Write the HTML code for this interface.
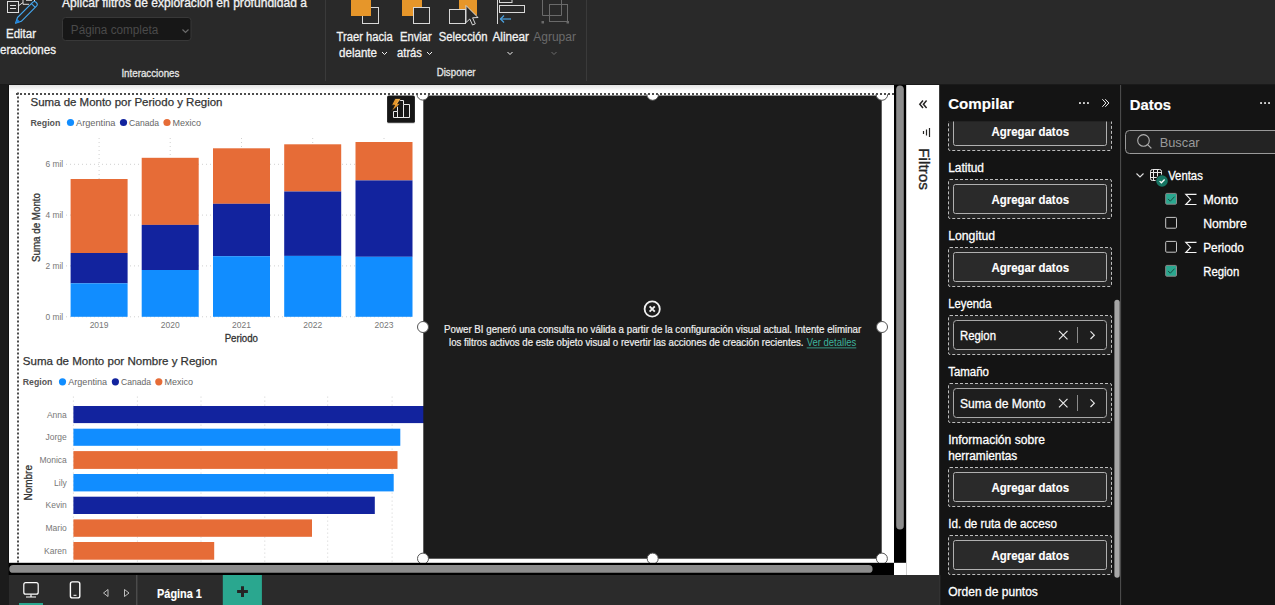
<!DOCTYPE html>
<html><head><meta charset="utf-8"><title>Power BI</title>
<style>html,body{margin:0;padding:0;background:#292929;overflow:hidden;width:1275px;height:605px}
svg{display:block;font-family:"Liberation Sans", sans-serif}</style></head>
<body><svg width="1275" height="605" viewBox="0 0 1275 605">
<rect x="0" y="0" width="1275" height="85" fill="#292929" />
<rect x="0" y="84" width="1275" height="1" fill="#1a1a1a" />
<rect x="0" y="85" width="9" height="520" fill="#1b1b1b" />
<rect x="8" y="85" width="1" height="490" fill="#111" />
<rect x="9" y="85" width="885" height="478" fill="#ffffff" />
<defs><linearGradient id="sh" x1="0" y1="0" x2="0" y2="1"><stop offset="0" stop-color="#e2e2e2"/><stop offset="1" stop-color="#ffffff"/></linearGradient><linearGradient id="shb" x1="0" y1="0" x2="0" y2="1"><stop offset="0" stop-color="#000" stop-opacity="0.35"/><stop offset="1" stop-color="#000" stop-opacity="0"/></linearGradient></defs>
<rect x="9" y="85" width="885" height="6" fill="url(#sh)" />
<g fill="none" stroke="#dedede" stroke-width="1"><rect x="7.5" y="1.5" width="11" height="11"/><path d="M10 5.5h6M10 8.5h6"/><path d="M18.8 5.6 L22.9 2.6 M23 -1 V4.3 H29 M26 0.3 H32 M34.5 -1 V1"/></g>
<g transform="translate(25.9,12.9) rotate(-45)"><path d="M-14.6 0 L-9.2 -2.7 H12.2 Q14.7 -2.7 14.7 0 Q14.7 2.7 12.2 2.7 H-9.2 Z" fill="none" stroke="#45a8f0" stroke-width="1.1" stroke-linejoin="round"/><path d="M-14.8 0 L-10.3 -2.2 V2.2 Z" fill="#1f80d8"/><path d="M10.5 -2.7 V2.7" stroke="#45a8f0" stroke-width="1"/></g>
<text x="6" y="38" font-size="12" fill="#f2f2f2" font-weight="normal" text-anchor="start" textLength="30" lengthAdjust="spacingAndGlyphs" stroke="#f2f2f2" stroke-width="0.3" >Editar</text>
<text x="0" y="54" font-size="12" fill="#f2f2f2" font-weight="normal" text-anchor="start" textLength="56" lengthAdjust="spacingAndGlyphs" stroke="#f2f2f2" stroke-width="0.3" >eracciones</text>
<text x="62" y="6.5" font-size="12" fill="#f2f2f2" font-weight="normal" text-anchor="start" textLength="245" lengthAdjust="spacingAndGlyphs" stroke="#f2f2f2" stroke-width="0.3" >Aplicar filtros de exploración en profundidad a</text>
<rect x="62.5" y="17.5" width="128.5" height="23" rx="3" fill="#171717" stroke="#383838"/>
<text x="70.8" y="33.5" font-size="12" fill="#4a4a4a" font-weight="normal" text-anchor="start" textLength="87.5" lengthAdjust="spacingAndGlyphs" >Página completa</text>
<path d="M182.5 29.5 L185.5 32.5 L188.5 29.5" fill="none" stroke="#6a6a6a" stroke-width="1.2"/>
<text x="121.4" y="76.5" font-size="11" fill="#e6e6e6" font-weight="normal" text-anchor="start" textLength="58" lengthAdjust="spacingAndGlyphs" stroke="#e6e6e6" stroke-width="0.3" >Interacciones</text>
<rect x="325" y="0" width="1" height="81" fill="#3a3a3a" />
<rect x="586" y="0" width="1" height="81" fill="#3a3a3a" />
<rect x="362.5" y="7.5" width="16" height="16" fill="none" stroke="#d8d8d8"/>
<rect x="351" y="-4" width="20" height="20" fill="#e6962a"/>
<rect x="402" y="-4" width="20" height="20" fill="#e6962a"/>
<rect x="413.5" y="7.5" width="16" height="16" fill="#292929" stroke="#d8d8d8"/>
<rect x="459" y="-4" width="18" height="19.5" fill="#e6962a"/>
<rect x="449.5" y="9.5" width="16" height="14" fill="#292929" stroke="#d8d8d8"/>
<path d="M466 5.5 V22.5 L469.8 19 L472.5 25 L475.3 23.8 L472.6 17.8 L478 17.5 Z" fill="#292929" stroke="#d8d8d8" stroke-width="1" stroke-linejoin="round"/>
<g fill="none" stroke="#d8d8d8"><path d="M497.5 0 V24"/><rect x="499.5" y="-3" width="12.5" height="5.5"/><rect x="499.5" y="5.5" width="25" height="7"/></g>
<g fill="none" stroke="#4ba3e3" stroke-width="1.2"><path d="M500.5 19 H511"/><path d="M504 15.5 L500.5 19 L504 22.5"/></g>
<g fill="none" stroke="#6a6a6a"><path d="M542.5 0 V15.5 H561.5 V0"/><rect x="549.5" y="4.5" width="18" height="17"/></g>
<rect x="541.5" y="21" width="2.5" height="2.5" fill="#6a6a6a"/><rect x="566.5" y="21" width="2.5" height="2.5" fill="#6a6a6a"/>
<text x="336.6" y="40.8" font-size="12" fill="#f2f2f2" font-weight="normal" text-anchor="start" textLength="56.2" lengthAdjust="spacingAndGlyphs" stroke="#f2f2f2" stroke-width="0.3" >Traer hacia</text>
<text x="339" y="56.5" font-size="12" fill="#f2f2f2" font-weight="normal" text-anchor="start" textLength="38" lengthAdjust="spacingAndGlyphs" stroke="#f2f2f2" stroke-width="0.3" >delante</text>
<text x="400" y="40.8" font-size="12" fill="#f2f2f2" font-weight="normal" text-anchor="start" textLength="31.7" lengthAdjust="spacingAndGlyphs" stroke="#f2f2f2" stroke-width="0.3" >Enviar</text>
<text x="397" y="56.5" font-size="12" fill="#f2f2f2" font-weight="normal" text-anchor="start" textLength="25" lengthAdjust="spacingAndGlyphs" stroke="#f2f2f2" stroke-width="0.3" >atrás</text>
<text x="438.7" y="40.8" font-size="12" fill="#f2f2f2" font-weight="normal" text-anchor="start" textLength="48.9" lengthAdjust="spacingAndGlyphs" stroke="#f2f2f2" stroke-width="0.3" >Selección</text>
<text x="492.5" y="40.8" font-size="12" fill="#f2f2f2" font-weight="normal" text-anchor="start" textLength="36.5" lengthAdjust="spacingAndGlyphs" stroke="#f2f2f2" stroke-width="0.3" >Alinear</text>
<text x="533.2" y="40.8" font-size="12" fill="#6b6b6b" font-weight="normal" text-anchor="start" textLength="42.8" lengthAdjust="spacingAndGlyphs" >Agrupar</text>
<path d="M382.0 52 L384.5 54.5 L387.0 52" fill="none" stroke="#f2f2f2" stroke-width="1"/>
<path d="M427.0 52 L429.5 54.5 L432.0 52" fill="none" stroke="#f2f2f2" stroke-width="1"/>
<path d="M507.5 52 L510 54.5 L512.5 52" fill="none" stroke="#f2f2f2" stroke-width="1"/>
<path d="M551.5 52 L554 54.5 L556.5 52" fill="none" stroke="#6b6b6b" stroke-width="1"/>
<text x="436.7" y="75.8" font-size="11" fill="#e6e6e6" font-weight="normal" text-anchor="start" textLength="38.9" lengthAdjust="spacingAndGlyphs" stroke="#e6e6e6" stroke-width="0.3" >Disponer</text>
<path d="M66 316.8 H414" stroke="#d0d0d0" stroke-width="1" stroke-dasharray="1 3"/>
<path d="M66 265.9 H414" stroke="#d0d0d0" stroke-width="1" stroke-dasharray="1 3"/>
<path d="M66 215.1 H414" stroke="#d0d0d0" stroke-width="1" stroke-dasharray="1 3"/>
<path d="M66 164.3 H414" stroke="#d0d0d0" stroke-width="1" stroke-dasharray="1 3"/>
<path d="M99.1 138 V316" stroke="#d0d0d0" stroke-width="1" stroke-dasharray="1 3"/>
<path d="M170.2 138 V316" stroke="#d0d0d0" stroke-width="1" stroke-dasharray="1 3"/>
<path d="M241.5 138 V316" stroke="#d0d0d0" stroke-width="1" stroke-dasharray="1 3"/>
<path d="M312.7 138 V316" stroke="#d0d0d0" stroke-width="1" stroke-dasharray="1 3"/>
<path d="M384.0 138 V316" stroke="#d0d0d0" stroke-width="1" stroke-dasharray="1 3"/>
<rect x="70.6" y="179" width="57" height="74" fill="#e66c37" />
<rect x="70.6" y="253" width="57" height="30.30000000000001" fill="#12239e" />
<rect x="70.6" y="283.3" width="57" height="33.5" fill="#118dff" />
<rect x="141.7" y="157.8" width="57" height="67.1" fill="#e66c37" />
<rect x="141.7" y="224.9" width="57" height="45.099999999999994" fill="#12239e" />
<rect x="141.7" y="270" width="57" height="46.80000000000001" fill="#118dff" />
<rect x="213" y="148.3" width="57" height="55.5" fill="#e66c37" />
<rect x="213" y="203.8" width="57" height="52.39999999999998" fill="#12239e" />
<rect x="213" y="256.2" width="57" height="60.60000000000002" fill="#118dff" />
<rect x="284.2" y="144.3" width="57" height="47.19999999999999" fill="#e66c37" />
<rect x="284.2" y="191.5" width="57" height="64.4" fill="#12239e" />
<rect x="284.2" y="255.9" width="57" height="60.900000000000006" fill="#118dff" />
<rect x="355.5" y="142" width="57" height="38.400000000000006" fill="#e66c37" />
<rect x="355.5" y="180.4" width="57" height="76.4" fill="#12239e" />
<rect x="355.5" y="256.8" width="57" height="60.0" fill="#118dff" />
<text x="63.2" y="319.5" font-size="8.4" fill="#777777" font-weight="normal" text-anchor="end" >0 mil</text>
<text x="63.2" y="268.59999999999997" font-size="8.4" fill="#777777" font-weight="normal" text-anchor="end" >2 mil</text>
<text x="63.2" y="217.79999999999998" font-size="8.4" fill="#777777" font-weight="normal" text-anchor="end" >4 mil</text>
<text x="63.2" y="167.0" font-size="8.4" fill="#777777" font-weight="normal" text-anchor="end" >6 mil</text>
<text x="99.1" y="328.2" font-size="8.5" fill="#777777" font-weight="normal" text-anchor="middle" >2019</text>
<text x="170.2" y="328.2" font-size="8.5" fill="#777777" font-weight="normal" text-anchor="middle" >2020</text>
<text x="241.5" y="328.2" font-size="8.5" fill="#777777" font-weight="normal" text-anchor="middle" >2021</text>
<text x="312.7" y="328.2" font-size="8.5" fill="#777777" font-weight="normal" text-anchor="middle" >2022</text>
<text x="384.0" y="328.2" font-size="8.5" fill="#777777" font-weight="normal" text-anchor="middle" >2023</text>
<text x="241.3" y="341.5" font-size="10" fill="#333333" font-weight="normal" text-anchor="middle" textLength="33.3" lengthAdjust="spacingAndGlyphs" stroke="#333333" stroke-width="0.3" >Periodo</text>
<text transform="translate(40.2,227.5) rotate(-90)" font-size="10" fill="#333333" text-anchor="middle" textLength="69" lengthAdjust="spacingAndGlyphs" stroke="#333333" stroke-width="0.3">Suma de Monto</text>
<text x="30.5" y="106.3" font-size="11.2" fill="#333333" font-weight="normal" text-anchor="start" textLength="192" lengthAdjust="spacingAndGlyphs" stroke="#333333" stroke-width="0.25" >Suma de Monto por Periodo y Region</text>
<text x="30.5" y="126.1" font-size="9.6" fill="#555555" font-weight="bold" text-anchor="start" textLength="29.9" lengthAdjust="spacingAndGlyphs" >Region</text>
<circle cx="70.5" cy="122.5" r="3.6" fill="#118dff"/>
<text x="76" y="126.1" font-size="9.6" fill="#666666" font-weight="normal" text-anchor="start" textLength="39.5" lengthAdjust="spacingAndGlyphs" >Argentina</text>
<circle cx="123.5" cy="122.5" r="3.6" fill="#12239e"/>
<text x="129" y="126.1" font-size="9.6" fill="#666666" font-weight="normal" text-anchor="start" textLength="30" lengthAdjust="spacingAndGlyphs" >Canada</text>
<circle cx="167" cy="122.5" r="3.6" fill="#e66c37"/>
<text x="172.5" y="126.1" font-size="9.6" fill="#666666" font-weight="normal" text-anchor="start" textLength="28.5" lengthAdjust="spacingAndGlyphs" >Mexico</text>
<rect x="387.1" y="97" width="27.8" height="27" rx="1.5" fill="#000" opacity="0.12"/>
<rect x="387.1" y="95.6" width="27.8" height="27.1" rx="1.5" fill="#161616"/>
<path d="M393.5 117.5 V111.5 H397.5 V100.5 H403.5 V104.5 H409.5 V117.5 Z M397.5 111.5 V117.5 M403.5 104.5 V117.5" fill="none" stroke="#e8e8e8" stroke-width="1"/>
<path d="M395 98.6 H401 L397.6 103.6 H400.6 L391.2 111.8 L394.6 105.2 H391.6 Z" fill="#e6962a" stroke="#161616" stroke-width="0.8" stroke-linejoin="round"/>
<path d="M395.6 99.6 H399.4 L396 104.5" fill="none" stroke="#f7c870" stroke-width="0.6"/>
<path d="M73.4 396.6 V562" stroke="#d0d0d0" stroke-width="1" stroke-dasharray="1 3"/>
<path d="M137.4 396.6 V562" stroke="#d0d0d0" stroke-width="1" stroke-dasharray="1 3"/>
<path d="M201 396.6 V562" stroke="#d0d0d0" stroke-width="1" stroke-dasharray="1 3"/>
<path d="M264.8 396.6 V562" stroke="#d0d0d0" stroke-width="1" stroke-dasharray="1 3"/>
<path d="M327.7 396.6 V562" stroke="#d0d0d0" stroke-width="1" stroke-dasharray="1 3"/>
<path d="M392.1 396.6 V562" stroke="#d0d0d0" stroke-width="1" stroke-dasharray="1 3"/>
<rect x="73.4" y="406" width="366.6" height="17.100000000000023" fill="#12239e" />
<text x="66.8" y="417.55" font-size="8.5" fill="#777777" font-weight="normal" text-anchor="end" >Anna</text>
<rect x="73.4" y="428.7" width="326.9" height="17.100000000000023" fill="#118dff" />
<text x="66.8" y="440.25" font-size="8.5" fill="#777777" font-weight="normal" text-anchor="end" >Jorge</text>
<rect x="73.4" y="451.1" width="324.1" height="17.799999999999955" fill="#e66c37" />
<text x="66.8" y="463.0" font-size="8.5" fill="#777777" font-weight="normal" text-anchor="end" >Monica</text>
<rect x="73.4" y="474" width="320.29999999999995" height="17.399999999999977" fill="#118dff" />
<text x="66.8" y="485.7" font-size="8.5" fill="#777777" font-weight="normal" text-anchor="end" >Lily</text>
<rect x="73.4" y="496.7" width="301.4" height="17.30000000000001" fill="#12239e" />
<text x="66.8" y="508.35" font-size="8.5" fill="#777777" font-weight="normal" text-anchor="end" >Kevin</text>
<rect x="73.4" y="519.4" width="238.6" height="17.399999999999977" fill="#e66c37" />
<text x="66.8" y="531.0999999999999" font-size="8.5" fill="#777777" font-weight="normal" text-anchor="end" >Mario</text>
<rect x="73.4" y="542" width="140.79999999999998" height="17.700000000000045" fill="#e66c37" />
<text x="66.8" y="553.85" font-size="8.5" fill="#777777" font-weight="normal" text-anchor="end" >Karen</text>
<text x="22.8" y="365.2" font-size="11.2" fill="#333333" font-weight="normal" text-anchor="start" textLength="194.4" lengthAdjust="spacingAndGlyphs" stroke="#333333" stroke-width="0.25" >Suma de Monto por Nombre y Region</text>
<text x="22.8" y="385.3" font-size="9.6" fill="#555555" font-weight="bold" text-anchor="start" textLength="29.6" lengthAdjust="spacingAndGlyphs" >Region</text>
<circle cx="62.5" cy="381.8" r="3.6" fill="#118dff"/>
<text x="68.3" y="385.3" font-size="9.6" fill="#666666" font-weight="normal" text-anchor="start" textLength="38.7" lengthAdjust="spacingAndGlyphs" >Argentina</text>
<circle cx="115.4" cy="381.8" r="3.6" fill="#12239e"/>
<text x="121" y="385.3" font-size="9.6" fill="#666666" font-weight="normal" text-anchor="start" textLength="30" lengthAdjust="spacingAndGlyphs" >Canada</text>
<circle cx="158.8" cy="381.8" r="3.6" fill="#e66c37"/>
<text x="164.5" y="385.3" font-size="9.6" fill="#666666" font-weight="normal" text-anchor="start" textLength="28.5" lengthAdjust="spacingAndGlyphs" >Mexico</text>
<text transform="translate(32,482.8) rotate(-90)" font-size="10" fill="#333333" text-anchor="middle" textLength="35.6" lengthAdjust="spacingAndGlyphs" stroke="#333333" stroke-width="0.3">Nombre</text>
<rect x="423.3" y="95.5" width="458.4" height="463.2" fill="#1c1c1c" />
<circle cx="652.2" cy="309" r="7.6" fill="none" stroke="#f0f0f0" stroke-width="1.8"/>
<path d="M649.6 306.4 L654.8 311.6 M654.8 306.4 L649.6 311.6" stroke="#f0f0f0" stroke-width="1.9"/>
<text x="444.1" y="333.3" font-size="10" fill="#f0f0f0" font-weight="normal" text-anchor="start" textLength="417.1" lengthAdjust="spacingAndGlyphs" stroke="#f0f0f0" stroke-width="0.2" >Power BI generó una consulta no válida a partir de la configuración visual actual. Intente eliminar</text>
<text x="449" y="346" font-size="10" fill="#f0f0f0" font-weight="normal" text-anchor="start" textLength="354.5" lengthAdjust="spacingAndGlyphs" stroke="#f0f0f0" stroke-width="0.2" >los filtros activos de este objeto visual o revertir las acciones de creación recientes.</text>
<text x="806.7" y="346" font-size="10" fill="#3cb39c" font-weight="normal" text-anchor="start" textLength="49.6" lengthAdjust="spacingAndGlyphs" >Ver detalles</text>
<rect x="806.7" y="347.5" width="49.6" height="0.8" fill="#3cb39c" />
<clipPath id="hc"><rect x="400" y="94" width="500" height="480"/></clipPath>
<circle cx="422.8" cy="94.3" r="5.8" fill="#ffffff" stroke="#555555" stroke-width="1" clip-path="url(#hc)"/>
<circle cx="652.7" cy="94.5" r="5.8" fill="#ffffff" stroke="#555555" stroke-width="1" clip-path="url(#hc)"/>
<circle cx="881.9" cy="94.5" r="5.8" fill="#ffffff" stroke="#555555" stroke-width="1" clip-path="url(#hc)"/>
<circle cx="423" cy="327" r="5.5" fill="#ffffff" stroke="#555555" stroke-width="1"/>
<circle cx="882" cy="327" r="5.5" fill="#ffffff" stroke="#555555" stroke-width="1"/>
<circle cx="423" cy="558.6" r="5.5" fill="#ffffff" stroke="#555555" stroke-width="1"/>
<circle cx="652.7" cy="558.6" r="5.5" fill="#ffffff" stroke="#555555" stroke-width="1"/>
<circle cx="881.9" cy="558.6" r="5.5" fill="#ffffff" stroke="#555555" stroke-width="1"/>
<path d="M16 94 H894" stroke="#4d4d4d" stroke-width="2" stroke-dasharray="2 2"/>
<path d="M18 92.5 V563" stroke="#4d4d4d" stroke-width="2" stroke-dasharray="2 2"/>
<rect x="894" y="85" width="12" height="478" fill="#000000" />
<rect x="896.2" y="85.5" width="7.6" height="444" rx="3.8" fill="#8c8c8c"/>
<rect x="9" y="562.8" width="885" height="12.2" fill="#000000" />
<rect x="9.3" y="565" width="863.3" height="7.8" rx="3.9" fill="#8c8c8c"/>
<rect x="894" y="562.8" width="12" height="12.2" fill="#ffffff" />
<rect x="906" y="85" width="33.5" height="490" fill="#ffffff" />
<rect x="906" y="85" width="1" height="490" fill="#cfcfcf" />
<path d="M923 100.5 L919.8 104.2 L923 108 M926.6 100.5 L923.4 104.2 L926.6 108" fill="none" stroke="#252423" stroke-width="1.5"/>
<path d="M923.5 131 V134 M926.5 129.5 V135.5 M929.5 128 V137" stroke="#252423" stroke-width="1.2"/>
<text transform="translate(918.5,148.2) rotate(90)" font-size="15" fill="#252423" textLength="41.8" lengthAdjust="spacingAndGlyphs" stroke="#252423" stroke-width="0.35">Filtros</text>
<rect x="939.3" y="85" width="181" height="520" fill="#141414" />
<rect x="1120" y="85" width="1" height="520" fill="#4a4a4a" />
<text x="948.2" y="109.4" font-size="15" fill="#ffffff" font-weight="bold" text-anchor="start" textLength="65.6" lengthAdjust="spacingAndGlyphs" stroke="#ffffff" stroke-width="0.15" >Compilar</text>
<rect x="1079.1" y="102.2" width="1.7" height="1.7" fill="#ffffff"/>
<rect x="1083.1" y="102.2" width="1.7" height="1.7" fill="#ffffff"/>
<rect x="1087.1" y="102.2" width="1.7" height="1.7" fill="#ffffff"/>
<path d="M1102.3 99.2 L1105.9 103 L1102.3 106.8 M1105.3 99.2 L1108.9 103 L1105.3 106.8" fill="none" stroke="#f0f0f0" stroke-width="1"/>
<clipPath id="cp"><rect x="939" y="121.6" width="182" height="484"/></clipPath>
<g clip-path="url(#cp)">
<rect x="948.5" y="111.5" width="163" height="39" rx="1.5" fill="#252525" stroke="#bdbdbd" stroke-width="1" stroke-dasharray="3 2"/>
<rect x="953.5" y="116.5" width="153" height="29" rx="2" fill="#2a2a2a" stroke="#b0b0b0" stroke-width="1"/>
<text x="1030.3" y="136" font-size="12" fill="#ffffff" font-weight="bold" text-anchor="middle" textLength="77.4" lengthAdjust="spacingAndGlyphs" stroke="#ffffff" stroke-width="0.15" >Agregar datos</text>
<text x="948.2" y="172.1" font-size="12.5" fill="#ffffff" font-weight="normal" text-anchor="start" textLength="35.8" lengthAdjust="spacingAndGlyphs" stroke="#ffffff" stroke-width="0.3" >Latitud</text>
<rect x="948.5" y="179.5" width="163" height="39" rx="1.5" fill="#252525" stroke="#bdbdbd" stroke-width="1" stroke-dasharray="3 2"/>
<rect x="953.5" y="184.5" width="153" height="29" rx="2" fill="#2a2a2a" stroke="#b0b0b0" stroke-width="1"/>
<text x="1030.3" y="204" font-size="12" fill="#ffffff" font-weight="bold" text-anchor="middle" textLength="77.4" lengthAdjust="spacingAndGlyphs" stroke="#ffffff" stroke-width="0.15" >Agregar datos</text>
<text x="948.2" y="240" font-size="12.5" fill="#ffffff" font-weight="normal" text-anchor="start" textLength="47" lengthAdjust="spacingAndGlyphs" stroke="#ffffff" stroke-width="0.3" >Longitud</text>
<rect x="948.5" y="247.5" width="163" height="39" rx="1.5" fill="#252525" stroke="#bdbdbd" stroke-width="1" stroke-dasharray="3 2"/>
<rect x="953.5" y="252.5" width="153" height="29" rx="2" fill="#2a2a2a" stroke="#b0b0b0" stroke-width="1"/>
<text x="1030.3" y="272" font-size="12" fill="#ffffff" font-weight="bold" text-anchor="middle" textLength="77.4" lengthAdjust="spacingAndGlyphs" stroke="#ffffff" stroke-width="0.15" >Agregar datos</text>
<text x="948.2" y="307.6" font-size="12.5" fill="#ffffff" font-weight="normal" text-anchor="start" textLength="43.4" lengthAdjust="spacingAndGlyphs" stroke="#ffffff" stroke-width="0.3" >Leyenda</text>
<rect x="948.5" y="315.5" width="163" height="39" rx="1.5" fill="#252525" stroke="#bdbdbd" stroke-width="1" stroke-dasharray="3 2"/>
<rect x="953.5" y="320.5" width="153" height="29" rx="3" fill="#1e1e1e" stroke="#a8a8a8" stroke-width="1"/>
<text x="960" y="339.9" font-size="12.5" fill="#ffffff" font-weight="normal" text-anchor="start" textLength="36" lengthAdjust="spacingAndGlyphs" stroke="#ffffff" stroke-width="0.3" >Region</text>
<path d="M1059 330.8 L1067.5 339.3 M1067.5 330.8 L1059 339.3" stroke="#e8e8e8" stroke-width="1.2"/>
<rect x="1077" y="327" width="1" height="16" fill="#8a8a8a" />
<path d="M1090.5 331.4 L1094.3 335.2 L1090.5 339" fill="none" stroke="#e8e8e8" stroke-width="1.2"/>
<text x="948.2" y="375.6" font-size="12.5" fill="#ffffff" font-weight="normal" text-anchor="start" textLength="40.8" lengthAdjust="spacingAndGlyphs" stroke="#ffffff" stroke-width="0.3" >Tamaño</text>
<rect x="948.5" y="383.5" width="163" height="39" rx="1.5" fill="#252525" stroke="#bdbdbd" stroke-width="1" stroke-dasharray="3 2"/>
<rect x="953.5" y="388.5" width="153" height="29" rx="3" fill="#1e1e1e" stroke="#a8a8a8" stroke-width="1"/>
<text x="960" y="407.9" font-size="12.5" fill="#ffffff" font-weight="normal" text-anchor="start" textLength="85.4" lengthAdjust="spacingAndGlyphs" stroke="#ffffff" stroke-width="0.3" >Suma de Monto</text>
<path d="M1059 398.8 L1067.5 407.3 M1067.5 398.8 L1059 407.3" stroke="#e8e8e8" stroke-width="1.2"/>
<rect x="1077" y="395" width="1" height="16" fill="#8a8a8a" />
<path d="M1090.5 399.4 L1094.3 403.2 L1090.5 407" fill="none" stroke="#e8e8e8" stroke-width="1.2"/>
<text x="948.2" y="443.9" font-size="12.5" fill="#ffffff" font-weight="normal" text-anchor="start" textLength="96.7" lengthAdjust="spacingAndGlyphs" stroke="#ffffff" stroke-width="0.3" >Información sobre</text>
<text x="948.2" y="459.8" font-size="12.5" fill="#ffffff" font-weight="normal" text-anchor="start" textLength="69" lengthAdjust="spacingAndGlyphs" stroke="#ffffff" stroke-width="0.3" >herramientas</text>
<rect x="948.5" y="467.5" width="163" height="39" rx="1.5" fill="#252525" stroke="#bdbdbd" stroke-width="1" stroke-dasharray="3 2"/>
<rect x="953.5" y="472.5" width="153" height="29" rx="2" fill="#2a2a2a" stroke="#b0b0b0" stroke-width="1"/>
<text x="1030.3" y="492" font-size="12" fill="#ffffff" font-weight="bold" text-anchor="middle" textLength="77.4" lengthAdjust="spacingAndGlyphs" stroke="#ffffff" stroke-width="0.15" >Agregar datos</text>
<text x="948.2" y="527.6" font-size="12.5" fill="#ffffff" font-weight="normal" text-anchor="start" textLength="108.8" lengthAdjust="spacingAndGlyphs" stroke="#ffffff" stroke-width="0.3" >Id. de ruta de acceso</text>
<rect x="948.5" y="535.5" width="163" height="39" rx="1.5" fill="#252525" stroke="#bdbdbd" stroke-width="1" stroke-dasharray="3 2"/>
<rect x="953.5" y="540.5" width="153" height="29" rx="2" fill="#2a2a2a" stroke="#b0b0b0" stroke-width="1"/>
<text x="1030.3" y="560" font-size="12" fill="#ffffff" font-weight="bold" text-anchor="middle" textLength="77.4" lengthAdjust="spacingAndGlyphs" stroke="#ffffff" stroke-width="0.15" >Agregar datos</text>
<text x="948.2" y="595.8" font-size="12.5" fill="#ffffff" font-weight="normal" text-anchor="start" textLength="89.7" lengthAdjust="spacingAndGlyphs" stroke="#ffffff" stroke-width="0.3" >Orden de puntos</text>
</g>
<rect x="1114.4" y="299.7" width="5.3" height="278" rx="2.6" fill="#a6a6a6"/>
<rect x="1121.3" y="85" width="154" height="520" fill="#141414" />
<text x="1129.8" y="109.7" font-size="15" fill="#ffffff" font-weight="bold" text-anchor="start" textLength="41.2" lengthAdjust="spacingAndGlyphs" stroke="#ffffff" stroke-width="0.15" >Datos</text>
<rect x="1260.2" y="102.2" width="1.7" height="1.7" fill="#ffffff"/>
<rect x="1264.2" y="102.2" width="1.7" height="1.7" fill="#ffffff"/>
<rect x="1268.2" y="102.2" width="1.7" height="1.7" fill="#ffffff"/>
<rect x="1125.5" y="130.5" width="170" height="23" rx="4" fill="#232323" stroke="#9a9a9a" stroke-width="1"/>
<circle cx="1143.5" cy="140.4" r="5.8" fill="none" stroke="#b0b0b0" stroke-width="1.1"/><path d="M1147.6 144.6 L1151.4 148.4" stroke="#b0b0b0" stroke-width="1.2"/>
<text x="1159.7" y="147.2" font-size="13" fill="#9a9a9a" font-weight="normal" text-anchor="start" textLength="39.9" lengthAdjust="spacingAndGlyphs" >Buscar</text>
<path d="M1136.5 173.5 L1140 177 L1143.5 173.5" fill="none" stroke="#e0e0e0" stroke-width="1.1"/>
<g fill="none" stroke="#e8e8e8" stroke-width="1"><rect x="1150.5" y="169.5" width="11" height="11" rx="2"/><path d="M1150.5 172.5 H1161.5 M1150.5 177.5 H1161.5 M1153.5 169.5 V180.5 M1157.5 169.5 V180.5"/></g>
<circle cx="1162" cy="181" r="6.5" fill="#141414"/><circle cx="1162" cy="181" r="5.8" fill="#167462"/><path d="M1159.6 181.1 L1161.4 182.8 L1164.6 179.5" fill="none" stroke="#fff" stroke-width="1.3"/>
<text x="1168.2" y="179.5" font-size="12.5" fill="#ffffff" font-weight="normal" text-anchor="start" textLength="34.6" lengthAdjust="spacingAndGlyphs" stroke="#ffffff" stroke-width="0.3" >Ventas</text>
<rect x="1165.7" y="193.4" width="10.8" height="10.8" rx="1" fill="#2aa78f" stroke="#8a8a8a" stroke-width="1"/>
<path d="M1168 198.9 L1170.3 201.20000000000002 L1174.5 196.70000000000002" fill="none" stroke="#1a4a40" stroke-width="1"/>
<path d="M1196.5 194.4 H1185.8 L1190.6 199.4 L1185.8 204.5 H1196.5" fill="none" stroke="#f4f4f4" stroke-width="1.15" stroke-linejoin="miter"/>
<text x="1203.2" y="203.5" font-size="12.5" fill="#ffffff" font-weight="normal" text-anchor="start" textLength="35.2" lengthAdjust="spacingAndGlyphs" stroke="#ffffff" stroke-width="0.3" >Monto</text>
<rect x="1165.7" y="217.4" width="10.8" height="10.8" rx="1" fill="none" stroke="#c8c8c8" stroke-width="1"/>
<text x="1203.2" y="227.5" font-size="12.5" fill="#ffffff" font-weight="normal" text-anchor="start" textLength="43.5" lengthAdjust="spacingAndGlyphs" stroke="#ffffff" stroke-width="0.3" >Nombre</text>
<rect x="1165.7" y="241.4" width="10.8" height="10.8" rx="1" fill="none" stroke="#c8c8c8" stroke-width="1"/>
<path d="M1196.5 242.4 H1185.8 L1190.6 247.4 L1185.8 252.5 H1196.5" fill="none" stroke="#f4f4f4" stroke-width="1.15" stroke-linejoin="miter"/>
<text x="1203.2" y="251.5" font-size="12.5" fill="#ffffff" font-weight="normal" text-anchor="start" textLength="40.7" lengthAdjust="spacingAndGlyphs" stroke="#ffffff" stroke-width="0.3" >Periodo</text>
<rect x="1165.7" y="265.4" width="10.8" height="10.8" rx="1" fill="#2aa78f" stroke="#8a8a8a" stroke-width="1"/>
<path d="M1168 270.9 L1170.3 273.2 L1174.5 268.7" fill="none" stroke="#1a4a40" stroke-width="1"/>
<text x="1203.2" y="275.5" font-size="12.5" fill="#ffffff" font-weight="normal" text-anchor="start" textLength="36.1" lengthAdjust="spacingAndGlyphs" stroke="#ffffff" stroke-width="0.3" >Region</text>
<rect x="9" y="575" width="930.5" height="30" fill="#2b2b2b" />
<rect x="0" y="575" width="9" height="30" fill="#1b1b1b" />
<rect x="939.3" y="575" width="1" height="30" fill="#3a3a3a" />
<rect x="23.8" y="582.7" width="14.4" height="11.5" rx="2" fill="none" stroke="#ffffff" stroke-width="1.2"/><path d="M31 594.5 V596.5 M26 597 H36" stroke="#fff" stroke-width="1.2"/>
<rect x="19" y="603" width="24" height="2" fill="#2aa78f" />
<rect x="70.4" y="581.9" width="9.4" height="16" rx="2" fill="none" stroke="#ffffff" stroke-width="1.4"/><path d="M73.5 595.3 H76.5" stroke="#fff" stroke-width="1"/>
<path d="M108 589.5 L103.5 593 L108 596.5 Z M124.5 589.5 L129 593 L124.5 596.5 Z" fill="none" stroke="#cfcfcf" stroke-width="0.9"/>
<rect x="136.3" y="575" width="1" height="30" fill="#5a5a5a" />
<text x="157.1" y="597.9" font-size="13" fill="#ffffff" font-weight="bold" text-anchor="start" textLength="44.7" lengthAdjust="spacingAndGlyphs" stroke="#ffffff" stroke-width="0.15" >Página 1</text>
<rect x="222.8" y="575" width="39.1" height="30" fill="#2aa78f" />
<path d="M242.5 586.2 V597 M237.1 591.6 H247.9" stroke="#252525" stroke-width="3"/>
</svg></body></html>
